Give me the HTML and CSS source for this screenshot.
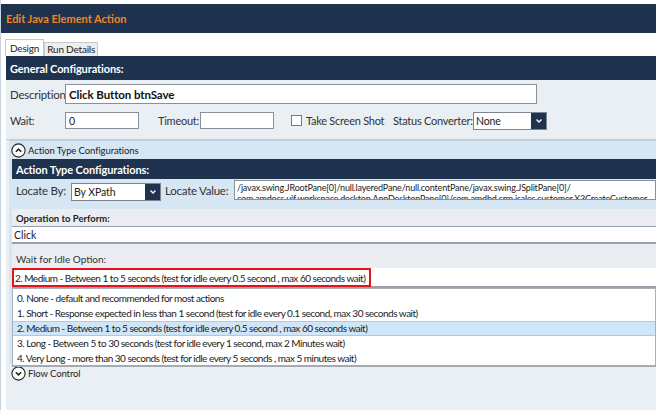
FILE: index.html
```html
<!DOCTYPE html>
<html>
<head>
<meta charset="utf-8">
<link rel="stylesheet" href="styles.css">
</head>
<body>
<div class="app">
  <div class="titlebar">Edit Java Element Action</div>
  <div class="tabs">
    <div class="tab active">Design</div>
    <div class="tab">Run Details</div>
  </div>
  <div class="content">
    <div class="sec-header">General Configurations:</div>
    <div class="general">
      <div class="row desc-row">
        <span class="lbl lbl-desc">Description</span>
        <div class="input desc-input">Click Button btnSave</div>
      </div>
      <div class="row wait-row">
        <span class="lbl lbl-wait">Wait:</span>
        <div class="input small-input">0</div>
        <span class="lbl lbl-timeout">Timeout:</span>
        <div class="input small-input"></div>
        <span class="checkbox"></span>
        <span class="lbl lbl-shot">Take Screen Shot</span>
        <span class="lbl lbl-status">Status Converter:</span>
        <div class="select status-select"><span class="sel-text">None</span><span class="sel-btn"><svg width="8" height="6" viewBox="0 0 8 6"><path d="M1.5 1.5 L4 4 L6.5 1.5" fill="none" stroke="#fff" stroke-width="1.3"/></svg></span></div>
      </div>
    </div>
    <div class="action-panel">
      <div class="expander">
        <span class="circle"><svg width="15" height="15" viewBox="0 0 15 15"><circle cx="7.5" cy="7.5" r="6.6" fill="#fff" stroke="#222" stroke-width="1.1"/><path d="M4.8 8.8 L7.5 6.1 L10.2 8.8" fill="none" stroke="#222" stroke-width="1.5"/></svg></span>
        <span>Action Type Configurations</span>
      </div>
      <div class="inner-header">Action Type Configurations:</div>
      <div class="locate-row">
        <span class="lbl lbl-locby">Locate By:</span>
        <div class="select locby-select"><span class="sel-text">By XPath</span><span class="sel-btn"><svg width="8" height="6" viewBox="0 0 8 6"><path d="M1.5 1.5 L4 4 L6.5 1.5" fill="none" stroke="#fff" stroke-width="1.3"/></svg></span></div>
        <span class="lbl lbl-locval">Locate Value:</span>
        <div class="textarea">/javax.swing.JRootPane[0]/null.layeredPane/null.contentPane/javax.swing.JSplitPane[0]/<br>com.amdocs.uif.workspace.desktop.AppDesktopPane[0]/com.amdbd.crm.isales.customer.X3CreateCustomer</div>
      </div>
      <div class="op-panel">
        <div class="op-label">Operation to Perform:</div>
        <div class="wide-input">Click</div>
        <div class="idle-label">Wait for Idle Option:</div>
        <div class="combo">
          <span class="combo-text">2. Medium - Between 1 to 5 seconds (test for idle every 0.5 second , max 60 seconds wait)</span>
          <div class="dropdown">
            <div class="item">0. None - default and recommended for most actions</div>
            <div class="item">1. Short - Response expected in less than 1 second (test for idle every 0.1 second, max 30 seconds wait)</div>
            <div class="item selected">2. Medium - Between 1 to 5 seconds (test for idle every 0.5 second , max 60 seconds wait)</div>
            <div class="item">3. Long - Between 5 to 30 seconds (test for idle every 1 second, max 2 Minutes wait)</div>
            <div class="item">4. Very Long - more than 30 seconds (test for idle every 5 seconds , max 5 minutes wait)</div>
          </div>
        </div>
      </div>
    </div>
    <div class="expander flow">
      <span class="circle"><svg width="15" height="15" viewBox="0 0 15 15"><circle cx="7.5" cy="7.5" r="6.6" fill="#fff" stroke="#222" stroke-width="1.1"/><path d="M4.8 6.2 L7.5 8.9 L10.2 6.2" fill="none" stroke="#222" stroke-width="1.5"/></svg></span>
      <span>Flow Control</span>
    </div>
  </div>
</div>
</body>
</html>
```
FILE: styles.css
```css
* { box-sizing: border-box; }
html, body { margin: 0; padding: 0; }
body {
  width: 656px;
  height: 410px;
  overflow: hidden;
  background: #ffffff;
  font-family: Lato, "Open Sans", sans-serif;
  font-size: 11px;
  color: #222;
}
.app {
  height: 410px;
  padding-top: 4px;
  border-left: 1px solid #c7d3df;
  display: flex;
  flex-direction: column;
}
.titlebar {
  height: 29px;
  background: #1f324e;
  color: #f5841f;
  font-weight: bold;
  font-size: 11px;
  padding-left: 5px;
  display: flex;
  align-items: center;
}
.tabs {
  display: flex;
  align-items: flex-end;
  height: 20px;
  margin-top: 3px;
  padding-left: 4px;
}
.tab {
  height: 14px;
  padding: 0 2px;
  font-size: 10px;
  line-height: 13px;
  border: 1px solid #c9c9c9;
  border-bottom: none;
  background: #eeeeee;
  color: #222;
  letter-spacing: -0.2px;
}
.tab.active {
  height: 17px;
  line-height: 16px;
  background: #fff;
  padding: 0 4px;
}
.content {
  flex: 1;
  margin-left: 5px;
  background: #eaeff4;
  display: flex;
  flex-direction: column;
}
.sec-header {
  height: 24px;
  background: #1f324e;
  color: #fff;
  font-weight: bold;
  font-size: 11px;
  padding-left: 4px;
  display: flex;
  align-items: center;
  letter-spacing: -0.1px;
}
.general {
  padding: 4px 0 0 4px;
  height: 60px;
  border-bottom: 1px solid #c3cdd7;
}
.row { display: flex; align-items: center; }
.lbl { font-size: 11px; color: #333; letter-spacing: -0.25px; white-space: nowrap; }
.lbl-desc { font-size: 11.5px; }
.desc-row { height: 20px; }
.lbl-desc { width: 55px; }
.desc-input {
  width: 472px;
  height: 20px;
  font-weight: bold;
  font-size: 11.5px;
  color: #111;
  letter-spacing: -0.1px;
}
.input {
  background: #fff;
  border: 1px solid #8a9099;
  padding-left: 3px;
  display: flex;
  align-items: center;
}
.wait-row { margin-top: 8px; height: 17px; }
.lbl-wait { width: 55px; }
.small-input { width: 74px; height: 17px; font-size: 10.5px; }
.lbl-timeout { margin-left: 19px; width: 42px; }
.checkbox {
  width: 11px; height: 11px;
  border: 1px solid #7a7a7a;
  background: #fff;
  margin-left: 17px;
  margin-right: 4px;
}
.lbl-shot { width: 87px; }
.lbl-status { margin-right: 3px; width: 77px; }
.select {
  display: flex;
  align-items: stretch;
  background: #fff;
  border: 1px solid #7d8591;
  font-size: 10.5px;
}
.sel-text { flex: 1; display: flex; align-items: center; padding-left: 2px; letter-spacing: -0.1px; }
.sel-btn {
  width: 15px;
  background: #1f324e;
  display: flex; align-items: center; justify-content: center;
}
.status-select { width: 74px; height: 18px; }
.action-panel {
  margin-left: 3px;
  background: #d6e6f3;
  border-top: 1px solid #bfcfdd;
  padding-bottom: 8px;
}
.expander {
  display: flex;
  align-items: center;
  height: 18px;
  padding-left: 2px;
  font-size: 9.5px;
  letter-spacing: -0.1px;
  color: #222;
}
.circle { width: 15px; height: 15px; margin-right: 2px; display: flex; }
.inner-header {
  margin-left: 3px;
  height: 20px;
  background: #1f324e;
  color: #fff;
  font-weight: bold;
  font-size: 11px;
  padding-left: 4px;
  display: flex;
  align-items: center;
  letter-spacing: -0.1px;
}
.locate-row {
  display: flex;
  align-items: flex-start;
  height: 30px;
  padding-left: 7px;
}
.lbl-locby { width: 55px; margin-top: 5px; font-size: 11.5px; }
.locby-select { width: 90px; height: 18px; margin-top: 4px; }
.lbl-locval { margin-left: 4px; width: 69px; margin-top: 5px; font-size: 11.5px; }
.textarea {
  flex: 1;
  height: 20px;
  margin-top: 1px;
  background: #fff;
  border: 1px solid #8a9099;
  font-size: 9px;
  line-height: 11px;
  padding: 1px 0 0 2px;
  overflow: hidden;
  white-space: nowrap;
  letter-spacing: -0.18px;
}
.op-panel {
  margin-left: 3px;
  background: #eaeef2;
  padding-top: 2px;
  padding-bottom: 68px;
}
.op-label {
  font-weight: bold;
  font-size: 9.5px;
  padding-left: 4px;
  height: 15px;
  line-height: 15px;
  color: #222;
}
.wide-input {
  height: 18px;
  background: #fff;
  border-top: 1px solid #9aa3ad;
  border-bottom: 2px solid #9aa3ad;
  font-size: 10.5px;
  padding-left: 2px;
  display: flex; align-items: center;
}
.idle-label {
  font-size: 10px;
  padding-left: 4px;
  height: 24px;
  line-height: 30px;
  color: #333;
}
.combo {
  position: relative;
  height: 20px;
  background: #fff;
  border-bottom: 2px solid #9aa3ad;
}
.combo-text {
  display: inline-flex;
  align-items: center;
  height: 19px;
  border: 2px solid #e3121c;
  padding-left: 1px;
  padding-right: 4px;
  font-size: 10px;
  letter-spacing: -0.5px;
  white-space: nowrap;
}
.dropdown {
  position: absolute;
  left: 0; right: 0;
  top: 20px;
  height: 79px;
  background: #fff;
  border: 1px solid #a8b0b9;
  border-bottom: 2px solid #a3abb4;
  padding-top: 2px;
  z-index: 5;
}
.item {
  height: 15px;
  line-height: 15px;
  padding-left: 4px;
  font-size: 10px;
  letter-spacing: -0.5px;
  white-space: nowrap;
  color: #222;
}
.item.selected {
  background: #cfe5f8;
  border-top: 1px solid #a8cbeb;
  border-bottom: 1px solid #a8cbeb;
  line-height: 13px;
}
.flow { padding-left: 5px; }
```
